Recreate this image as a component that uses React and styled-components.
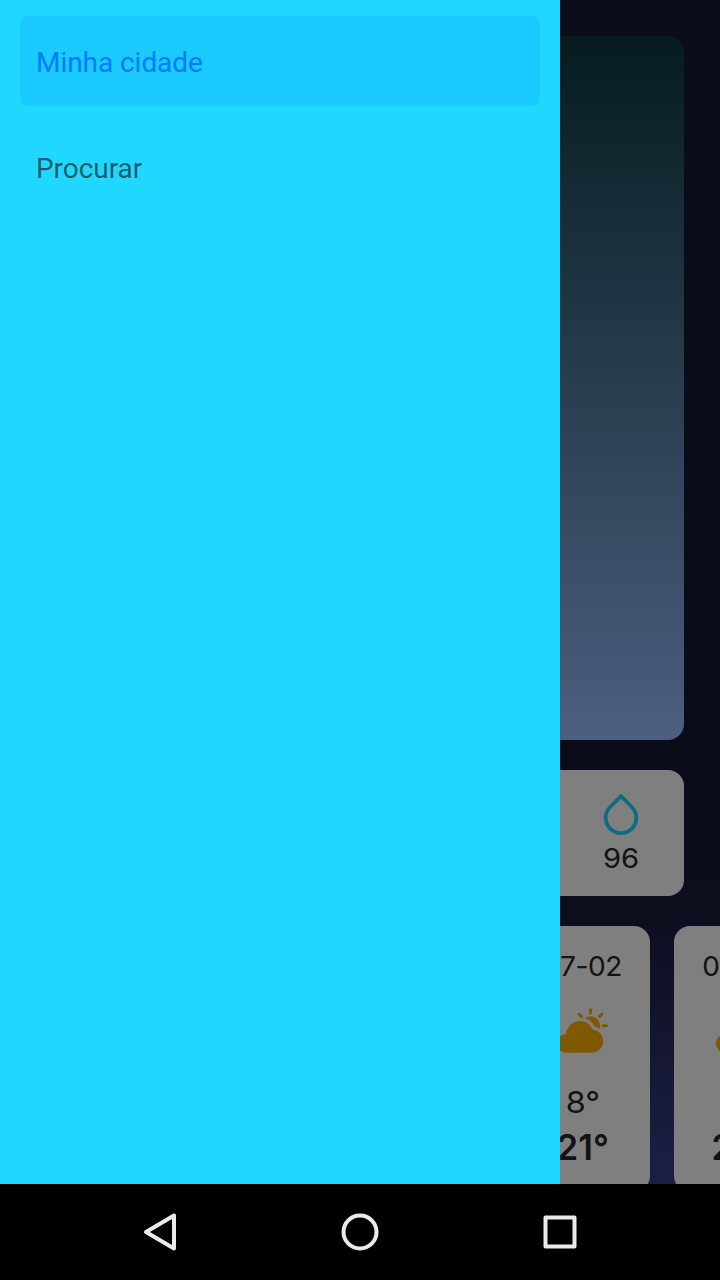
import React from 'react';
import styled, { createGlobalStyle } from 'styled-components';
import { FiDroplet } from 'react-icons/fi';
import { IoPartlySunny } from 'react-icons/io5';

const GlobalStyle = createGlobalStyle`
  * { box-sizing: border-box; }
  body { margin: 0; background: #000; }
`;

const Phone = styled.div`
  width: 720px;
  height: 1280px;
  display: flex;
  flex-direction: column;
  overflow: hidden;
  background: #000;
`;

const Screen = styled.div`
  position: relative;
  height: 1184px;
  flex: none;
  overflow: hidden;
  background: linear-gradient(174deg, #191b38 0%, #151832 35%, #151832 68%, #191c3c 78%, #363a84 97%);
  font-family: Inter, sans-serif;
  color: #262626;
`;

const Content = styled.main`
  display: flex;
  flex-direction: column;
  gap: 30px;
  padding: 36px 0 0 36px;
`;

const Hero = styled.section`
  width: 648px;
  height: 704px;
  border-radius: 16px;
  background: linear-gradient(180deg, #0c3840 0%, #98bfff 100%);
`;

const Details = styled.section`
  width: 648px;
  height: 126px;
  display: flex;
  justify-content: flex-end;
  padding: 21px 39px 0 0;
  border-radius: 16px;
  background: #fff;
`;

const Humidity = styled.div`
  width: 48px;
  display: flex;
  flex-direction: column;
  align-items: center;
`;

const DropIcon = styled(FiDroplet)`
  flex: none;
  width: 46px;
  height: 46px;
  color: #1ed6ff;
`;

const Label = styled.span`
  display: block;
  font-size: ${(p) => p.$size}px;
  line-height: ${(p) => p.$line}px;
  font-weight: ${(p) => p.$weight || 400};
  white-space: nowrap;
  transform: scaleX(${(p) => p.$stretch || 1});
`;

const DateLabel = styled(Label)`
  word-spacing: 0;
  letter-spacing: -0.4px;
`;

const Forecast = styled.section`
  display: flex;
  gap: 24px;
  margin-left: 479px;
`;

const Day = styled.article`
  flex: none;
  width: 135px;
  height: 266px;
  display: flex;
  flex-direction: column;
  align-items: center;
  padding-top: 22px;
  border-radius: 16px;
  background: #fff;
`;

const WeatherIcon = styled(IoPartlySunny)`
  flex: none;
  width: 51px;
  height: 51px;
  margin: 21px 0 23px;
  color: #ffb300;
`;

const Scrim = styled.div`
  position: absolute;
  inset: 0;
  background: rgba(0, 0, 0, 0.5);
`;

const Drawer = styled.nav`
  position: absolute;
  top: 0;
  left: 0;
  width: 560px;
  height: 100%;
  display: flex;
  flex-direction: column;
  gap: 16px;
  padding: 16px 20px;
  background: #20d7ff;
`;

const DrawerItem = styled.a`
  height: 90px;
  display: flex;
  align-items: center;
  padding: 3px 16px 0;
  border-radius: 8px;
  background: ${(p) => (p.$active ? '#1bcbff' : 'transparent')};
  color: ${(p) => (p.$active ? '#007aff' : 'rgba(28, 28, 30, 0.68)')};
  font: 400 28px/38px Roboto, sans-serif;
  letter-spacing: -0.05px;
`;

const SystemBar = styled.footer`
  flex: 1;
  display: flex;
  justify-content: center;
  align-items: center;
  gap: 152px;
`;

const NavIcon = styled.svg`
  width: 48px;
  height: 48px;
  fill: none;
  stroke: #ebebeb;
  stroke-width: 4;
  stroke-linejoin: round;
`;

const days = [
  { date: '07-02', min: '8°', max: '21°' },
  { date: '07-03', min: '9°', max: '20°' },
];

export default function App() {
  return (
    <Phone>
      <GlobalStyle />
      <Screen>
        <Content>
          <Hero />
          <Details>
            <Humidity>
              <DropIcon />
              <Label $size={27.5} $line={42} $stretch={1.06}>96</Label>
            </Humidity>
          </Details>
          <Forecast>
            {days.map((d) => (
              <Day key={d.date}>
                <DateLabel $size={27.5} $line={36} $stretch={1.02}>{d.date}</DateLabel>
                <WeatherIcon />
                <Label $size={30} $line={46} $stretch={1.08}>{d.min}</Label>
                <Label $size={35.5} $line={46} $weight={600} $stretch={0.98}>{d.max}</Label>
              </Day>
            ))}
          </Forecast>
        </Content>
        <Scrim />
        <Drawer>
          <DrawerItem $active>Minha cidade</DrawerItem>
          <DrawerItem>Procurar</DrawerItem>
        </Drawer>
      </Screen>
      <SystemBar>
        <NavIcon viewBox="0 0 48 48"><path d="M38 7.5v33L10 24z" /></NavIcon>
        <NavIcon viewBox="0 0 48 48"><circle cx="24" cy="24" r="16.5" /></NavIcon>
        <NavIcon viewBox="0 0 48 48"><rect x="9.5" y="9.5" width="29" height="29" /></NavIcon>
      </SystemBar>
    </Phone>
  );
}
